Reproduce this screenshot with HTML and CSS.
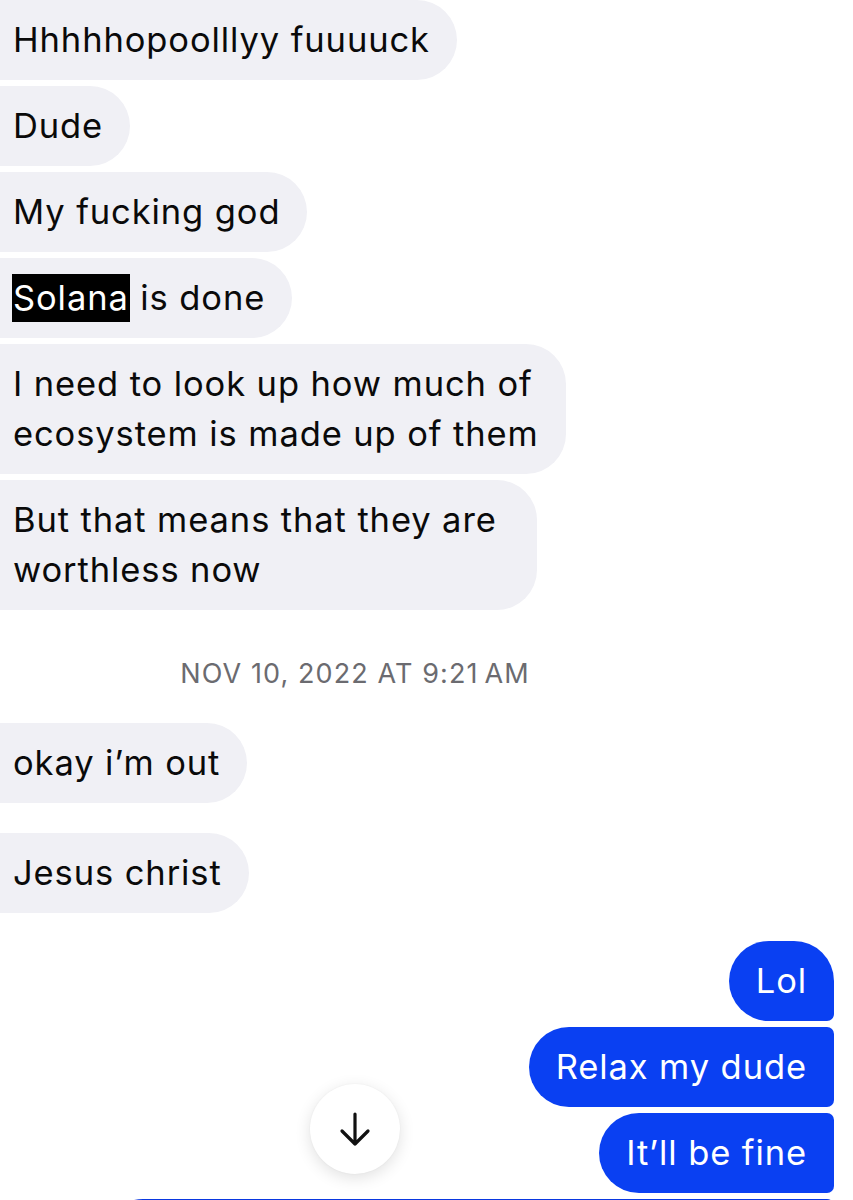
FILE: index.html
```html
<!DOCTYPE html>
<html lang="en">
<head>
<meta charset="utf-8">
<title>Messages</title>
<link rel="stylesheet" href="styles.css">
</head>
<body>
<div class="screen">
  <div class="thread">
    <div class="msg in first">Hhhhhopoolllyy fuuuuck</div>
    <div class="msg in">Dude</div>
    <div class="msg in">My fucking god</div>
    <div class="msg in"><span class="redact">Solana</span> is done</div>
    <div class="msg in">I need to look up how much of<br>ecosystem is made up of them</div>
    <div class="msg in wide">But that means that they are<br>worthless now</div>

    <div class="stamp">NOV 10, 2022 AT 9:21&#8201;AM</div>

    <div class="msg in">okay i’m out</div>
    <div class="msg in spaced">Jesus christ</div>

    <div class="msg out spaced-lg">Lol</div>
    <div class="msg out">Relax my dude</div>
    <div class="msg out">It’ll be fine</div>
    <div class="msg out tail">&nbsp;</div>
  </div>

  <button class="scroll-down" aria-label="Scroll to bottom">
    <svg width="40" height="40" viewBox="0 0 40 40" aria-hidden="true">
      <path d="M20 5 V35 M7 22 L20 35 L33 22" fill="none" stroke="#111" stroke-width="3.2" stroke-linecap="round" stroke-linejoin="round"/>
    </svg>
  </button>
</div>
</body>
</html>
```

FILE: styles.css
```css
html, body {
  margin: 0;
  padding: 0;
  background: #ffffff;
}

.screen {
  position: relative;
  width: 853px;
  height: 1200px;
  overflow: hidden;
  font-family: Inter, "Liberation Sans", Arial, sans-serif;
}

.thread {
  display: flex;
  flex-direction: column;
  padding: 0 19px 0 0;
}

.msg {
  font-size: 34.5px;
  line-height: 50px;
  letter-spacing: 0.9px;
  padding: 15px 27px;
  border-radius: 40px;
  margin-top: 6px;
  white-space: nowrap;
}

.msg.in {
  align-self: flex-start;
  background: #f0f0f5;
  color: #0a0a0a;
  margin-left: -40px;
  padding-left: 53px;
}

.msg.in.wide {
  padding-right: 40px;
}

.msg.first {
  margin-top: 0;
}

.msg.out {
  align-self: flex-end;
  background: #0a40f2;
  color: #ffffff;
  border-radius: 40px 7px 7px 40px;
}

.msg.out.spaced-lg {
  margin-top: 28px;
  border-radius: 40px 40px 7px 40px;
}

.msg.spaced {
  margin-top: 30px;
}

.msg.tail {
  width: 731px;
  box-sizing: border-box;
  background: #0a38e0;
}

.redact {
  display: inline-block;
  background: #000;
  color: #fff;
  line-height: 48px;
  padding: 0 1px;
  margin-left: -1px;
}

.stamp {
  align-self: stretch;
  text-align: center;
  padding: 46px 124px 25px 0;
  font-size: 27px;
  line-height: 36px;
  letter-spacing: 1.1px;
  color: #6b6b70;
}

.scroll-down {
  position: absolute;
  left: 310px;
  top: 1084px;
  width: 90px;
  height: 90px;
  border: none;
  border-radius: 50%;
  background: #ffffff;
  box-shadow: 0 4px 16px rgba(0, 0, 0, 0.12), 0 0 2px rgba(0, 0, 0, 0.05);
  display: flex;
  align-items: center;
  justify-content: center;
  padding: 0;
}
```
